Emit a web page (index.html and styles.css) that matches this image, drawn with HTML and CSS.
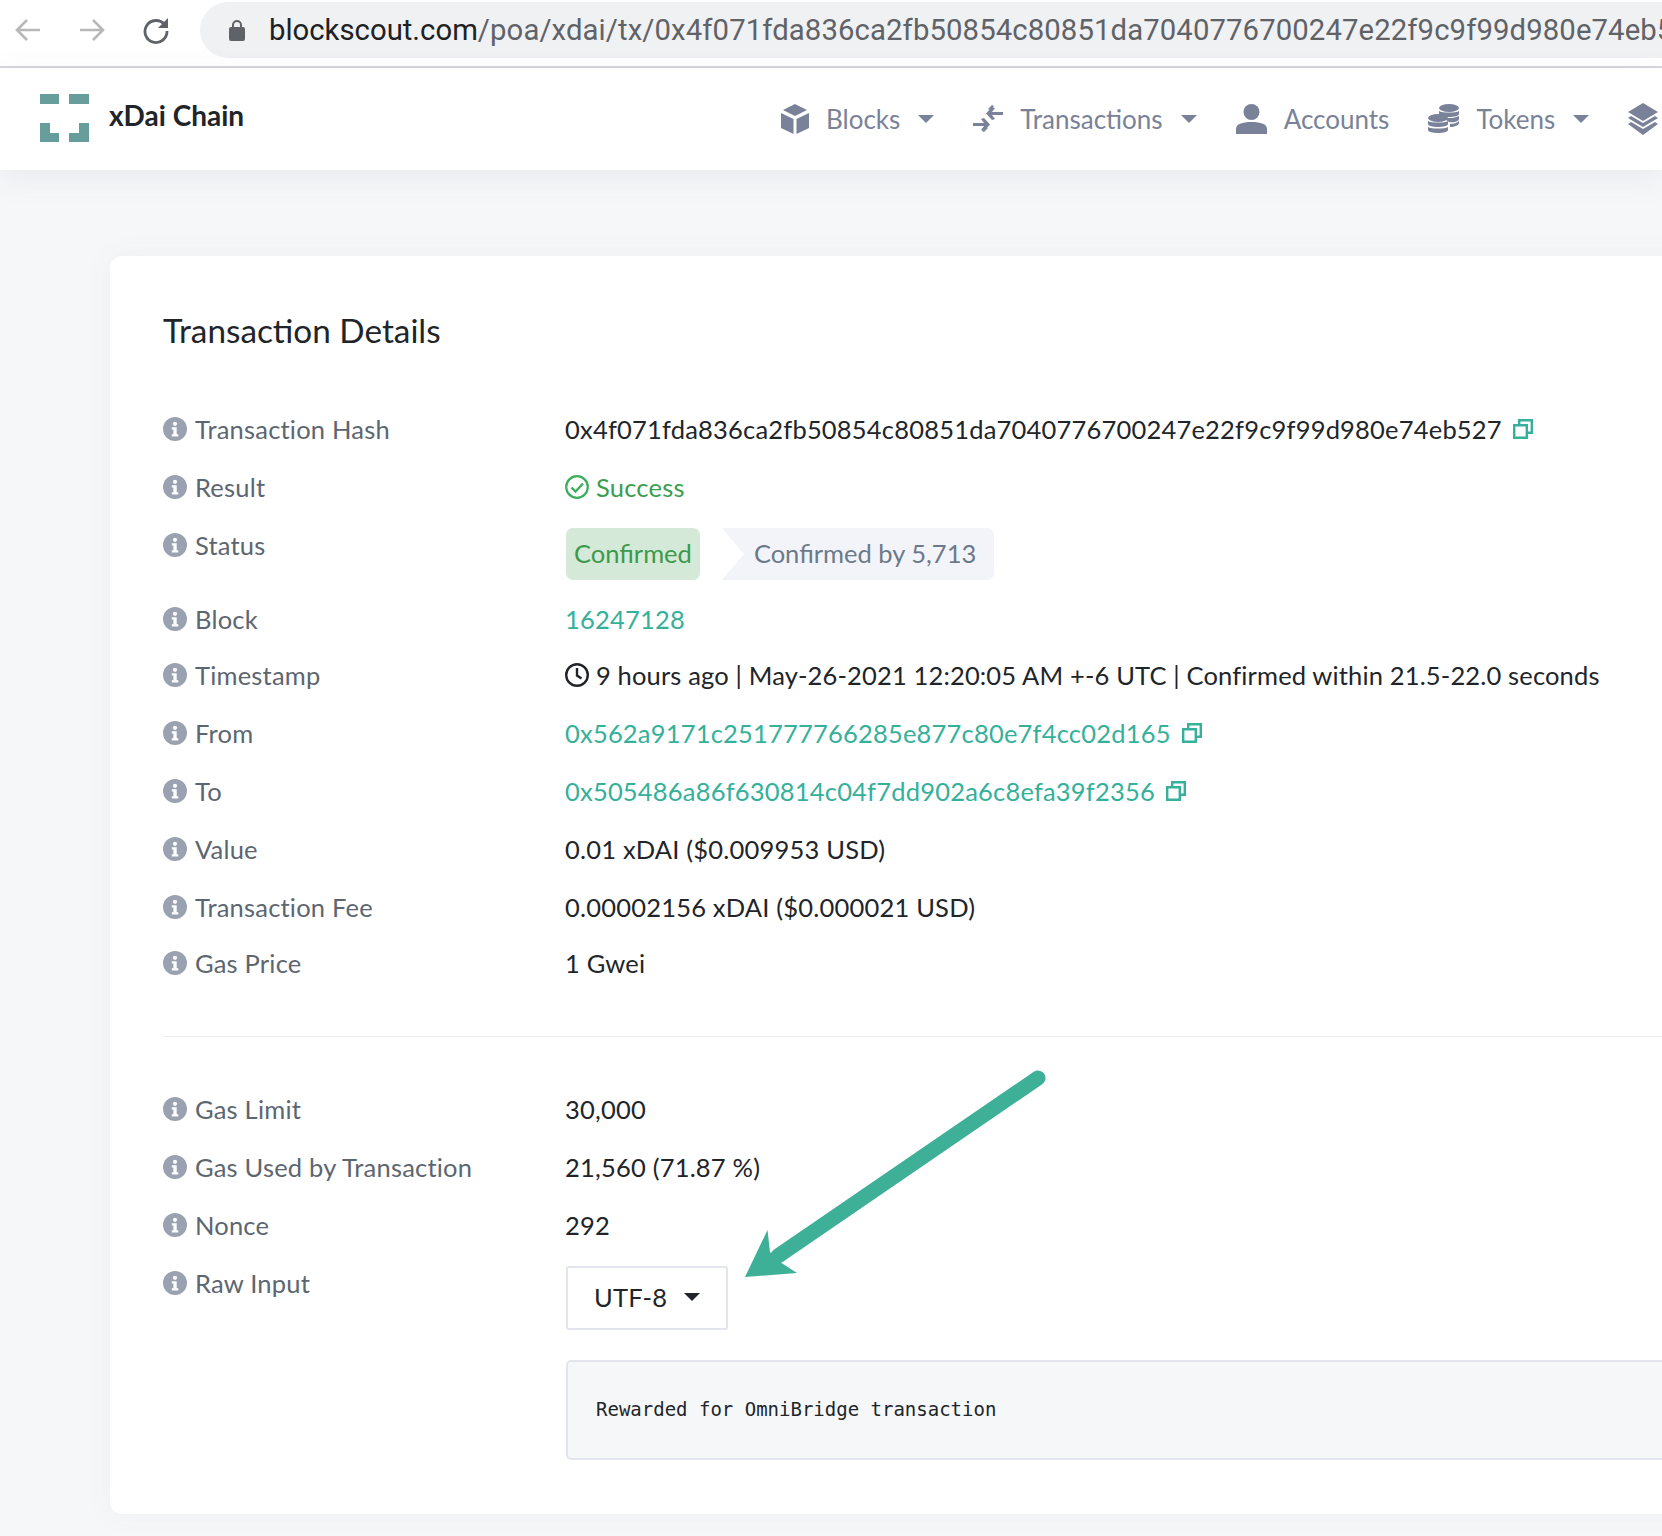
FILE: index.html
```html
<!DOCTYPE html>
<html lang="en">
<head>
    <meta charset="UTF-8">
    <title>Transaction Details</title>
    <link rel="stylesheet" href="styles.css">
</head>
<body>
    <svg class="defs" xmlns="http://www.w3.org/2000/svg">
        <symbol id="info" viewBox="0 0 24 24">
            <circle cx="12" cy="12" r="12" fill="#9aa1b0"></circle>
            <circle cx="12" cy="6.8" r="2.1" fill="#fff"></circle>
            <path d="M8.8 10.2h4.9v7h1.6v2.2H8.8v-2.2h1.6v-4.8H8.8z" fill="#fff"></path>
        </symbol>
        <symbol id="copy" viewBox="0 0 20 20">
            <path d="M1.2 6.2h12.6v12.6H1.2z M6.2 6V1.2h12.6v12.6h-5" fill="none" stroke="#35b09a" stroke-width="2.4"></path>
        </symbol>
    </svg>

    <div class="toolbar">
        <svg class="tool-icon" width="28" height="28" viewBox="0 0 28 28"><path d="M26 14H3M13 4 3 14l10 10" fill="none" stroke="#b8b8b8" stroke-width="2.6"></path></svg>
        <svg class="tool-icon" width="28" height="28" viewBox="0 0 28 28"><path d="M2 14h23M15 4l10 10-10 10" fill="none" stroke="#b8b8b8" stroke-width="2.6"></path></svg>
        <svg class="tool-icon" width="28" height="28" viewBox="0 0 28 28"><path d="M22.5 8.5A11 11 0 1 0 25 15" fill="none" stroke="#5f6368" stroke-width="2.8"></path><path d="M26 2v10H16z" fill="#5f6368"></path></svg>
        <div class="urlbar">
            <svg width="16" height="22" viewBox="0 0 16 22"><path d="M4 9V6a4 4 0 0 1 8 0v3" fill="none" stroke="#5f6368" stroke-width="2"></path><rect y="8" width="16" height="14" rx="2" fill="#5f6368"></rect></svg>
            <span class="url"><b>blockscout.com</b>/poa/xdai/tx/0x4f071fda836ca2fb50854c80851da7040776700247e22f9c9f99d980e74eb527</span>
        </div>
    </div>

    <header class="navbar">
        <a class="brand">
            <svg width="49" height="48" viewBox="0 0 49 48">
                <path d="M0 0h19v10H0zM29 0h20v10H29zM0 29h10v10h9v9H0zM39 29h10v19H29v-9h10z" fill="#679e9b"></path>
            </svg>
            <span>xDai Chain</span>
        </a>
        <nav class="menu">
            <a class="menu-item">
                <svg width="28" height="30" viewBox="0 0 28 30"><path d="M14 0l12 6-12 6L2 6z M0 9l12.5 6v15L0 24z M28 9l-12.5 6v15L28 24z" fill="#7a8299"></path></svg>
                Blocks<i class="caret"></i>
            </a>
            <a class="menu-item">
                <svg width="30" height="30" viewBox="0 0 30 30"><path d="M0 19h11l-3-4 3-1 6 6.5-6 6.5-3-1 3-4H0z M30 8H19l3-4-3-1-6 6.5 6 6.5 3-1-3-4h11z" fill="#7a8299"></path><path d="M19 1l-4 4 2 1 4-4zM13 23l-4 4 2 1 4-4z" fill="#7a8299"></path></svg>
                Transactions<i class="caret"></i>
            </a>
            <a class="menu-item">
                <svg width="31" height="30" viewBox="0 0 31 30"><ellipse cx="15.5" cy="8" rx="8" ry="8" fill="#7a8299"></ellipse><path d="M0 30v-5c0-5 6-7 15.5-7S31 20 31 25v5z" fill="#7a8299"></path></svg>
                Accounts
            </a>
            <a class="menu-item">
                <svg width="31" height="30" viewBox="0 0 31 30"><g fill="#7a8299"><ellipse cx="21" cy="4" rx="10" ry="4"></ellipse><path d="M11 7c3 2 17 2 20 0v3c0 4-20 4-20 0zM14 13c6 2 13 1 17-1v3c0 2-5 4-10 3zM22 20c4 0 7-1 9-3v2c0 2-4 4-9 4z"></path><ellipse cx="10" cy="14" rx="10" ry="4"></ellipse><path d="M0 17c3 2 17 2 20 0v3c0 4-20 4-20 0zM0 23c3 2 17 2 20 0v3c0 4-20 4-20 0z"></path></g></svg>
                Tokens<i class="caret"></i>
            </a>
            <a class="menu-item">
                <svg width="30" height="32" viewBox="0 0 30 32"><path d="M15 0l15 9-15 9L0 9zM3 13l12 7 12-7 3 2-15 9L0 15zM3 19l12 7 12-7 3 2-15 11L0 21z" fill="#7a8299"></path></svg>
            </a>
        </nav>
    </header>

    <main class="page">
        <section class="card">
            <h1 class="title">Transaction Details</h1>

            <div class="row"><div class="label"><svg class="info"><use href="#info"></use></svg>Transaction Hash</div>
                <div class="value">0x4f071fda836ca2fb50854c80851da7040776700247e22f9c9f99d980e74eb527<svg class="copy"><use href="#copy"></use></svg></div></div>
            <div class="row"><div class="label"><svg class="info"><use href="#info"></use></svg>Result</div>
                <div class="value success">
                    <svg class="inline-icon" viewBox="0 0 24 24"><circle cx="12" cy="12" r="10.8" fill="none" stroke="#3dae5c" stroke-width="2.2"></circle><path d="M6.5 12.5l4 4 7.5-8" fill="none" stroke="#3dae5c" stroke-width="2.4"></path></svg>Success</div></div>
            <div class="row row-status"><div class="label"><svg class="info"><use href="#info"></use></svg>Status</div>
                <div class="value badges"><span class="badge-ok">Confirmed</span><span class="badge-by">Confirmed by 5,713</span></div></div>
            <div class="row row-short"><div class="label"><svg class="info"><use href="#info"></use></svg>Block</div>
                <div class="value link">16247128</div></div>
            <div class="row"><div class="label"><svg class="info"><use href="#info"></use></svg>Timestamp</div>
                <div class="value stamp">
                    <svg class="inline-icon" viewBox="0 0 24 24"><circle cx="12" cy="12" r="10.8" fill="none" stroke="#212529" stroke-width="2.4"></circle><path d="M12 5v7.5l4.5 3" fill="none" stroke="#212529" stroke-width="2.4"></path></svg>9 hours ago | May-26-2021 12:20:05 AM +-6 UTC | Confirmed within 21.5-22.0 seconds</div></div>
            <div class="row"><div class="label"><svg class="info"><use href="#info"></use></svg>From</div>
                <div class="value link">0x562a9171c251777766285e877c80e7f4cc02d165<svg class="copy"><use href="#copy"></use></svg></div></div>
            <div class="row"><div class="label"><svg class="info"><use href="#info"></use></svg>To</div>
                <div class="value link">0x505486a86f630814c04f7dd902a6c8efa39f2356<svg class="copy"><use href="#copy"></use></svg></div></div>
            <div class="row"><div class="label"><svg class="info"><use href="#info"></use></svg>Value</div>
                <div class="value">0.01 xDAI ($0.009953 USD)</div></div>
            <div class="row row-short"><div class="label"><svg class="info"><use href="#info"></use></svg>Transaction Fee</div>
                <div class="value">0.00002156 xDAI ($0.000021 USD)</div></div>
            <div class="row"><div class="label"><svg class="info"><use href="#info"></use></svg>Gas Price</div>
                <div class="value">1 Gwei</div></div>

            <hr class="divider">

            <div class="row"><div class="label"><svg class="info"><use href="#info"></use></svg>Gas Limit</div>
                <div class="value">30,000</div></div>
            <div class="row"><div class="label"><svg class="info"><use href="#info"></use></svg>Gas Used by Transaction</div>
                <div class="value">21,560 (71.87 %)</div></div>
            <div class="row"><div class="label"><svg class="info"><use href="#info"></use></svg>Nonce</div>
                <div class="value">292</div></div>
            <div class="row row-raw"><div class="label"><svg class="info"><use href="#info"></use></svg>Raw Input</div>
                <div class="value raw">
                    <button class="encoding">UTF-8<i class="caret caret-dark"></i></button>
                    <pre class="input-data">Rewarded for OmniBridge transaction</pre>
                </div></div>
        </section>
    </main>

    <!-- annotation drawn over the page -->
    <svg class="arrow" width="1662" height="1536" xmlns="http://www.w3.org/2000/svg">
        <path d="M1038 1078 778 1256" fill="none" stroke="#3eb097" stroke-width="15" stroke-linecap="round"></path>
        <path d="M745 1277 767.5 1230 770 1252 780 1262 797 1273z" fill="#3eb097"></path>
    </svg>
</body>
</html>
```

FILE: styles.css
```css
*{
    margin: 0;
    padding: 0;
    box-sizing: border-box;
}
html,body{
    width: 1662px;
    height: 1536px;
    overflow: hidden;
}
body{
    background-color: #f6f7f9;
    font-family: "Lato", "Noto Sans", sans-serif;
    color: #212529;
    position: relative;
}
.defs{
    display: none;
}

/* browser bar */
.toolbar{
    height: 68px;
    background: #fff;
    border-bottom: 2px solid #d6d6dc;
    display: flex;
    align-items: center;
    padding-left: 14px;
    padding-bottom: 6px;
    overflow: hidden;
}
.tool-icon{
    flex: none;
    margin-right: 36px;
}
.urlbar{
    flex: none;
    width: 1600px;
    height: 56px;
    margin-left: -6px;
    background: #f0f1f3;
    border-radius: 28px;
    display: flex;
    align-items: center;
    gap: 24px;
    padding-left: 29px;
    white-space: nowrap;
    overflow: hidden;
}
.urlbar svg{
    flex: none;
}
.url{
    font-family: "Roboto", "Liberation Sans", sans-serif;
    font-size: 29.3px;
    letter-spacing: .1px;
    color: #5f6368;
}
.url b{
    font-weight: 400;
    letter-spacing: 0;
    color: #202124;
}

/* nav */
.navbar{
    height: 102px;
    background: #fff;
    box-shadow: 0 8px 30px rgba(90,95,120,.08);
    display: flex;
    align-items: center;
    padding-left: 40px;
    position: relative;
    overflow: hidden;
}
.brand{
    display: flex;
    align-items: center;
    gap: 20px;
    width: 741px;
    flex: none;
    font-weight: 700;
    font-size: 28px;
    color: #212529;
    margin-top: -2px;
}
.brand svg{
    flex: none;
}
.brand span{
    margin-top: -6px;
}
.menu{
    display: flex;
    align-items: center;
    gap: 39px;
    white-space: nowrap;
}
.menu-item{
    display: flex;
    align-items: center;
    gap: 17px;
    font-size: 26px;
    color: #7a8299;
}
.menu-item svg{
    flex: none;
}
.caret{
    display: inline-block;
    width: 0;
    height: 0;
    border-left: 8px solid transparent;
    border-right: 8px solid transparent;
    border-top: 8px solid #7a8299;
}
.menu-item .caret{
    margin-left: 1px;
}

/* card */
.page{
    padding: 86px 0 0 110px;
}
.card{
    width: 1700px;
    height: 1258px;
    background: #fff;
    border-radius: 12px;
    padding: 0 53px;
    box-shadow: 0 0 30px rgba(90,95,120,.05);
}
.title{
    font-size: 33.3px;
    font-weight: 400;
    line-height: 44px;
    padding-top: 52px;
    height: 144px;
    color: #212529;
}
.row{
    display: grid;
    grid-template-columns: 402px 1fr;
    height: 58px;
    font-size: 25.5px;
    letter-spacing: .2px;
    line-height: 56px;
}
.row-status{
    height: 74px;
}
.row-short{
    height: 56px;
}
.label{
    display: flex;
    align-items: center;
    height: 58px;
    color: #5c6670;
    white-space: nowrap;
}
.info{
    width: 24px;
    height: 24px;
    margin-right: 8px;
    flex: none;
}
.value{
    white-space: nowrap;
    display: flex;
    align-items: center;
    height: 58px;
}
.stamp{
    letter-spacing: .15px;
}
.copy{
    width: 20px;
    height: 20px;
    margin-left: 11px;
    flex: none;
}
.inline-icon{
    width: 24px;
    height: 24px;
    margin-right: 7px;
    flex: none;
}
.success{
    color: #3a9e4f;
}
.link{
    color: #35b09a;
}
.badges{
    height: 74px;
    padding-top: 12px;
    padding-left: 1px;
    align-items: flex-start;
    gap: 22px;
    letter-spacing: 0;
}
.badge-ok{
    height: 52px;
    line-height: 50px;
    padding: 0 8px;
    border-radius: 7px;
    background: #d4e9d7;
    color: #3c9a4c;
}
.badge-by{
    height: 52px;
    line-height: 50px;
    padding: 0 18px 0 32px;
    border-radius: 0 7px 7px 0;
    background: #f3f4f9;
    color: #6b7a8a;
    clip-path: polygon(0 0, 100% 0, 100% 100%, 0 100%, 22px 50%);
}
.divider{
    border: 0;
    border-top: 1px solid #eceef2;
    margin: 44px 0 43px;
}
.row-raw{
    height: 206px;
}
.raw{
    height: auto;
    display: block;
    padding-top: 12px;
    padding-left: 1px;
}
.encoding{
    display: flex;
    align-items: center;
    gap: 17px;
    width: 162px;
    height: 64px;
    padding-left: 26px;
    padding-bottom: 2px;
    background: #fff;
    border: 2px solid #e2e5ec;
    border-radius: 3px;
    font: inherit;
    letter-spacing: inherit;
    color: #212529;
}
.caret-dark{
    border-top-color: #212529;
}
.input-data{
    margin-top: 30px;
    height: 100px;
    padding-left: 28px;
    background: #f6f7f9;
    border: 2px solid #e2e5ec;
    border-radius: 5px;
    font-family: "DejaVu Sans Mono", monospace;
    font-size: 19px;
    letter-spacing: 0;
    line-height: 94px;
    color: #212529;
}

/* annotation */
.arrow{
    position: absolute;
    left: 0;
    top: 0;
    pointer-events: none;
}
```
